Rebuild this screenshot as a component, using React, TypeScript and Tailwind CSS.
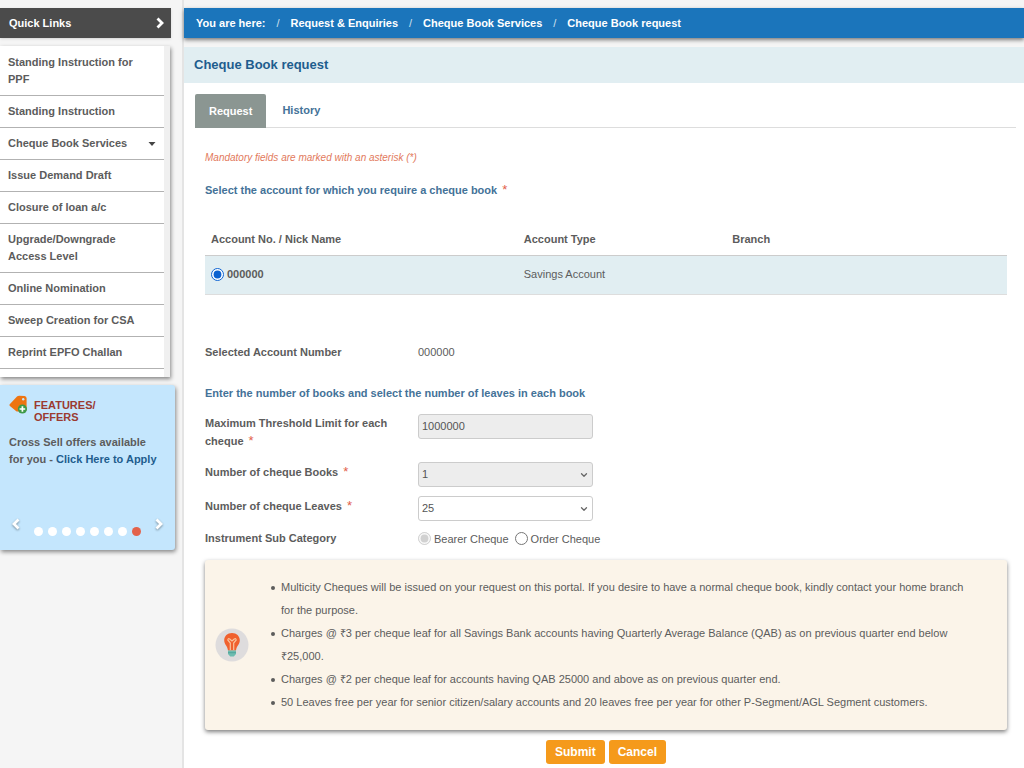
import React, { useState } from "react";
import { ChevronDown } from "lucide-react";

const quickLinks = [
  "Standing Instruction for PPF",
  "Standing Instruction",
  "Cheque Book Services",
  "Issue Demand Draft",
  "Closure of loan a/c",
  "Upgrade/Downgrade Access Level",
  "Online Nomination",
  "Sweep Creation for CSA",
  "Reprint EPFO Challan",
];

const crumbs = ["Request & Enquiries", "Cheque Book Services", "Cheque Book request"];

const notes = [
  "Multicity Cheques will be issued on your request on this portal. If you desire to have a normal cheque book, kindly contact your home branch for the purpose.",
  "Charges @ ₹3 per cheque leaf for all Savings Bank accounts having Quarterly Average Balance (QAB) as on previous quarter end below ₹25,000.",
  "Charges @ ₹2 per cheque leaf for accounts having QAB 25000 and above as on previous quarter end.",
  "50 Leaves free per year for senior citizen/salary accounts and 20 leaves free per year for other P-Segment/AGL Segment customers.",
];

function Star() {
  return <span className="ml-[5px] text-[13px] leading-none font-normal text-[#e2604a]">*</span>;
}

function Chevron({ left = false }: { left?: boolean }) {
  return (
    <svg viewBox="0 0 10 12" className={left ? "h-3 w-2.5 rotate-180" : "h-3 w-2.5"} aria-hidden="true">
      <path d="M2.5 1.5 L7 6 L2.5 10.5" fill="none" stroke="currentColor" strokeWidth="2.8" />
    </svg>
  );
}

function TagIcon() {
  return (
    <svg viewBox="0 0 20 20" className="size-5 shrink-0" aria-hidden="true">
      <path d="M0.5 9.5 L8 1.6 Q9 0.6 10.5 0.7 L15.5 1 Q17.6 1.2 17.6 3.2 V14.5 Q17.6 16.6 15.5 16.6 H8.5 Q7.6 16.6 7 15.9 L0.6 10.8 Z" fill="#ee7411" />
      <circle cx="14.2" cy="4.2" r="1.2" fill="#c4e6fd" />
      <circle cx="13.4" cy="14" r="4.6" fill="#3f9a48" />
      <path d="M13.4 11.2 V16.8 M10.6 14 H16.2" stroke="#fff" strokeWidth="1.7" />
    </svg>
  );
}

function BulbIcon() {
  return (
    <svg viewBox="0 0 34 34" className="size-[34px] shrink-0" aria-hidden="true">
      <circle cx="17" cy="17" r="16.5" fill="#dedcdd" />
      <path d="M17 5 C12.4 5 9.2 8.2 9.2 12.3 C9.2 16.5 12.6 18 13 22.5 H21 C21.4 18 24.8 16.5 24.8 12.3 C24.8 8.2 21.6 5 17 5 Z" fill="#f0612e" />
      <path d="M15.3 22 V15 L12.8 12 Q13 10 14.7 11 L17 13 L19.3 11 Q21 10 21.2 12 L18.7 15 V22" fill="none" stroke="#f8c39b" strokeWidth="1.2" />
      <path d="M13 22.5 H21 V26 L18.8 28.5 H15.2 L13 26 Z" fill="#6dbcb0" />
      <path d="M13 24.7 H21" stroke="#4a9c94" strokeWidth="0.8" />
    </svg>
  );
}

type SelectProps = { id: string; value: string; disabled?: boolean };

function SelectBox({ id, value, disabled = false }: SelectProps) {
  return (
    <div className="relative w-[175px]">
      <select
        id={id}
        defaultValue={value}
        disabled={disabled}
        className="block h-[25px] w-full appearance-none rounded-[3px] border border-[#ccc] bg-white px-[3px] text-[#555] opacity-100 disabled:bg-[#ededed]"
      >
        <option>{value}</option>
      </select>
      <ChevronDown className="pointer-events-none absolute top-2 right-1 size-2.5 text-[#666]" strokeWidth={3} />
    </div>
  );
}

function Sidebar() {
  return (
    <aside className="w-[184px] shrink-0 border-r-2 border-[#e4e4e4] pt-2">
      <button className="flex h-[30px] w-[171px] items-center justify-between bg-[#4b4b4b] pr-1.5 pl-[9px] font-bold text-white shadow-sm">
        Quick Links
        <Chevron />
      </button>
      <nav className="mt-2 w-[170px] bg-[#f0f0f0] pr-1.5 shadow-[1px_2px_4px_rgba(0,0,0,0.45)]">
        <ul className="bg-white pt-px pb-2">
          {quickLinks.map((item) => (
            <li key={item} className="border-b border-[#b2b2b2]">
              <a href="#" className="flex items-center justify-between px-2 py-[7px] leading-[17px] font-bold text-[#5c5c5c]">
                <span className="max-w-[135px]">{item}</span>
                {item === "Cheque Book Services" && (
                  <svg viewBox="0 0 8 4" className="h-1 w-2" aria-hidden="true">
                    <path d="M0.5 0 H7.5 L4 4 Z" fill="#444" />
                  </svg>
                )}
              </a>
            </li>
          ))}
        </ul>
      </nav>
      <section className="mt-2 flex h-[165px] w-[175px] flex-col rounded-r-[3px] bg-[#c4e6fd] pt-2.5 shadow-[1px_2px_4px_rgba(0,0,0,0.45)]">
        <div className="flex gap-[5px] pl-[9px]">
          <TagIcon />
          <h2 className="pt-1 leading-3 font-bold text-[#9b3a30]">
            FEATURES/
            <br />
            OFFERS
          </h2>
        </div>
        <p className="mt-[11px] pl-[9px] leading-[17px] font-bold text-[#5c5c5c]">
          Cross Sell offers available
          <br />
          for you - <a href="#" className="text-[#1e5d8e]">Click Here to Apply</a>
        </p>
        <div className="mt-auto flex items-end justify-between px-[11px] pb-3.5 text-white">
          <button aria-label="Previous offer" className="pb-1.5 drop-shadow-[0_1px_1px_rgba(0,0,0,0.4)]"><Chevron left /></button>
          <div className="flex gap-[5px]">
            {[0, 1, 2, 3, 4, 5, 6, 7].map((n) => (
              <button
                key={n}
                aria-label={"Offer " + (n + 1)}
                className={n === 7 ? "size-[9px] rounded-full bg-[#e3624a]" : "size-[9px] rounded-full bg-white"}
              />
            ))}
          </div>
          <button aria-label="Next offer" className="pb-1.5 drop-shadow-[0_1px_1px_rgba(0,0,0,0.4)]"><Chevron /></button>
        </div>
      </section>
    </aside>
  );
}

export default function App() {
  const [category, setCategory] = useState("Bearer Cheque");
  return (
    <div className="flex min-h-screen bg-[#f5f5f5] font-['Liberation_Sans',Arial,sans-serif] text-[11px] text-[#5c5c5c]">
      <Sidebar />
      <div className="flex min-w-0 flex-1 flex-col pt-2">
        <nav className="flex h-[30px] shrink-0 items-center bg-[#1b75bb] pl-3 font-bold text-white shadow-[0_2px_4px_rgba(0,0,0,0.5)]">
          <span>You are here:</span>
          {crumbs.map((crumb) => (
            <React.Fragment key={crumb}>
              <span className="w-[25px] text-center font-normal text-[#cfe0ee]">/</span>
              <a href="#">{crumb}</a>
            </React.Fragment>
          ))}
        </nav>
        <main className="mt-[9px] flex-1 bg-white">
          <h1 className="bg-[#e1eef2] pl-2.5 text-[13px] leading-9 font-bold text-[#1e5d8e]">Cheque Book request</h1>
          <div className="mt-[11px] mr-2 ml-[11px] flex border-b border-[#ddd]" role="tablist">
            <button role="tab" aria-selected="true" className="-mb-px h-[34px] rounded-t-[2px] bg-[#8b9692] px-3.5 font-bold text-white">
              Request
            </button>
            <button role="tab" aria-selected="false" className="h-[33px] px-4 font-bold text-[#447298]">History</button>
          </div>
          <div className="pt-[22px] pr-[17px] pb-1 pl-[21px]">
            <p className="text-[10px] leading-4 text-[#e2795c] italic">Mandatory fields are marked with an asterisk (*)</p>
            <h2 className="mt-[15px] leading-[18px] font-bold text-[#447298]">
              Select the account for which you require a cheque book<Star />
            </h2>
            <table className="mt-6 w-full table-fixed text-left">
              <thead>
                <tr className="h-8 border-b border-[#ccc]">
                  <th className="w-[39%] pl-[6px]">Account No. / Nick Name</th>
                  <th className="w-[26%] pl-[6px]">Account Type</th>
                  <th className="pl-[6px]">Branch</th>
                </tr>
              </thead>
              <tbody>
                <tr className="h-[39px] border-b border-[#ddd] bg-[#e1eef2]">
                  <td className="pl-[6px]">
                    <label className="flex items-center gap-[3px] font-bold">
                      <input type="radio" name="account" defaultChecked className="size-[13px] accent-[#0b62d0]" />
                      000000
                    </label>
                  </td>
                  <td className="pl-[6px]">Savings Account</td>
                  <td />
                </tr>
              </tbody>
            </table>
            <div className="mt-12 flex leading-[18px]">
              <span className="w-[213px] font-bold">Selected Account Number</span>
              <span>000000</span>
            </div>
            <h2 className="mt-[23px] leading-[18px] font-bold text-[#447298]">
              Enter the number of books and select the number of leaves in each book
            </h2>
            <div className="mt-3 flex h-12 items-start">
              <label htmlFor="limit" className="w-[213px] pr-5 leading-[18px] font-bold">
                Maximum Threshold Limit for each <span className="inline-block">cheque<Star /></span>
              </label>
              <input id="limit" disabled defaultValue="1000000" className="h-[25px] w-[175px] rounded-[3px] border border-[#ccc] bg-[#ededed] px-[3px] text-[#555]" />
            </div>
            <div className="flex h-[34px] items-start">
              <label htmlFor="books" className="w-[213px] leading-5 font-bold">Number of cheque Books<Star /></label>
              <SelectBox id="books" value="1" disabled />
            </div>
            <div className="flex h-[34px] items-start">
              <label htmlFor="leaves" className="w-[213px] leading-5 font-bold">Number of cheque Leaves<Star /></label>
              <SelectBox id="leaves" value="25" />
            </div>
            <fieldset className="flex">
              <legend className="float-left w-[213px] leading-4 font-bold">Instrument Sub Category</legend>
              <div className="flex gap-1.5 leading-[18px]">
                {["Bearer Cheque", "Order Cheque"].map((name, i) => (
                  <label key={name} className="flex items-center gap-[3px]">
                    <input type="radio" name="category" disabled={i === 0} checked={category === name} onChange={() => setCategory(name)} className="size-[13px]" />
                    {name}
                  </label>
                ))}
              </div>
            </fieldset>
            <section className="mt-3 flex items-center rounded-[3px] bg-[#fbf4e9] py-4 pr-9 pl-2.5 shadow-[0_2px_4px_rgba(0,0,0,0.5)]">
              <BulbIcon />
              <ul className="ml-[22px]">
                {notes.map((note) => (
                  <li key={note} className="flex gap-1.5 leading-[23px]">
                    <span className="mt-2.5 size-1 shrink-0 rounded-full bg-[#5c5c5c]" />
                    <span>{note}</span>
                  </li>
                ))}
              </ul>
            </section>
            <div className="mt-2.5 flex justify-center gap-1">
              <button className="h-6 rounded-[3px] bg-[#f59a1b] px-[9px] text-[12px] font-bold text-white">Submit</button>
              <button className="h-6 rounded-[3px] bg-[#f59a1b] px-[9px] text-[12px] font-bold text-white">Cancel</button>
            </div>
          </div>
        </main>
      </div>
    </div>
  );
}
